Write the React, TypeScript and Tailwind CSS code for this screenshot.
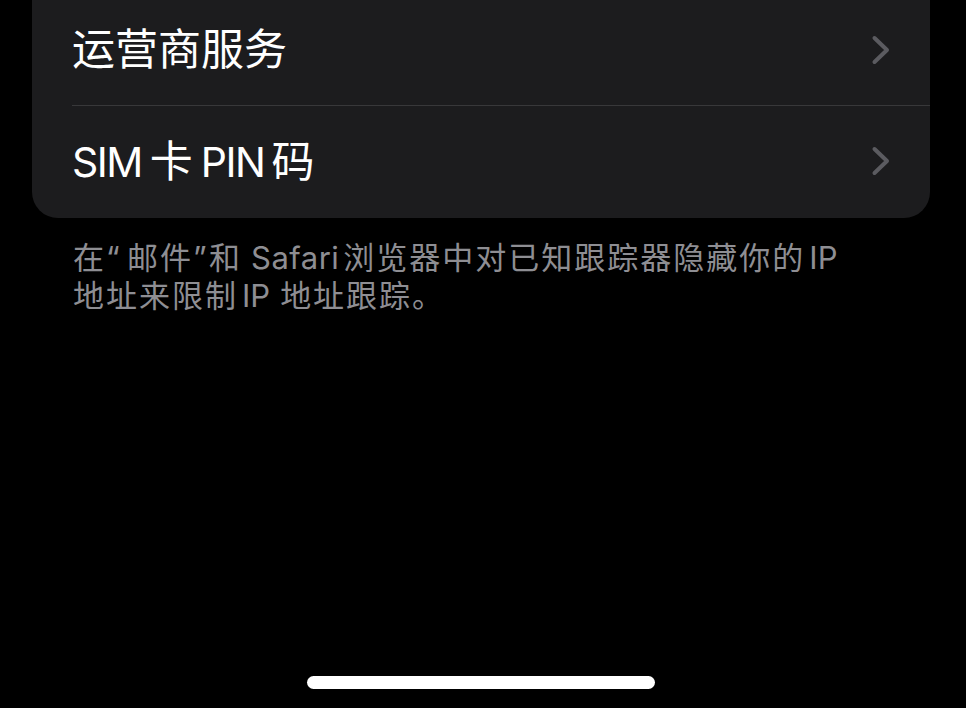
import React from "react";

const Chevron = () => (
  <svg width="20" height="32" viewBox="0 0 20 32" fill="none">
    <path d="M3.5 4 L16 16 L3.5 28" stroke="#5b5b60" strokeWidth="4" strokeLinecap="round" strokeLinejoin="round" />
  </svg>
);

const Row = ({ children, sep }: { children: React.ReactNode; sep?: boolean }) => (
  <div className="flex items-stretch pl-[40px]">
    <div
      className={
        "flex-1 flex items-center pr-[39px] " +
        (sep ? "border-b border-[#38383a] h-[106px] pb-[6px]" : "h-[112px] pb-[2px]")
      }
    >
      <div className="flex-1 text-white text-[43px] leading-none whitespace-nowrap">{children}</div>
      <Chevron />
    </div>
  </div>
);

export default function App() {
  const font = { fontFamily: 'Inter, "Noto Sans CJK SC", sans-serif' };
  const cjk = "tracking-[2px]";
  return (
    <div className="w-[966px] h-[708px] bg-black flex flex-col overflow-hidden" style={font}>
      <div className="ml-[32px] mr-[36px] bg-[#1c1c1e] rounded-b-[26px] flex flex-col">
        <Row sep>运营商服务</Row>
        <Row>
          <span className="text-[41px] tracking-[-1.5px]">SIM</span>
          <span className="ml-[8px]">卡</span>
          <span className="ml-[8px] text-[41px] tracking-[-1.5px]">PIN</span>
          <span className="ml-[7px]">码</span>
        </Row>
      </div>
      <div className="pl-[73px] pt-[21px] text-[31px] leading-[38px] text-[#8e8e93] whitespace-nowrap">
        <div>
          <span className={cjk}>在</span>
          <span className="inline-block w-[21px]">“</span>
          <span className={cjk}>邮件</span>
          <span className="inline-block w-[16px]">”</span>
          <span className={cjk}>和</span>
          <span className="ml-[9px] tracking-[0.5px]">Safari</span>
          <span className={"ml-[4px] " + cjk}>浏览器中对已知跟踪器隐藏你的</span>
          <span className="ml-[4px]">IP</span>
        </div>
        <div>
          <span className={cjk}>地址来限制</span>
          <span className="ml-[4px]">IP</span>
          <span className={"ml-[10px] " + cjk}>地址跟踪。</span>
        </div>
      </div>
      <div className="flex-1" />
      <div className="flex justify-center pb-[19px] pr-[4px]">
        <div className="w-[348px] h-[13px] rounded-full bg-white" />
      </div>
    </div>
  );
}
